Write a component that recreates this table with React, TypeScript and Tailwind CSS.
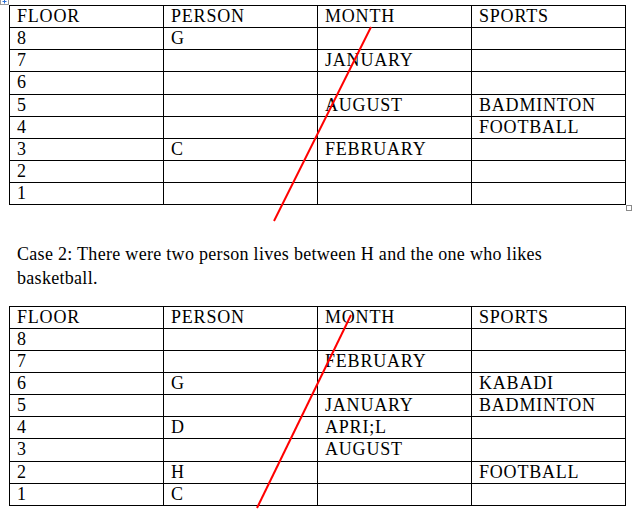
import React from "react";

type Row = [string, string, string, string];

const caseOne: Row[] = [
  ["FLOOR", "PERSON", "MONTH", "SPORTS"],
  ["8", "G", "", ""],
  ["7", "", "JANUARY", ""],
  ["6", "", "", ""],
  ["5", "", "AUGUST", "BADMINTON"],
  ["4", "", "", "FOOTBALL"],
  ["3", "C", "FEBRUARY", ""],
  ["2", "", "", ""],
  ["1", "", "", ""],
];

const caseTwo: Row[] = [
  ["FLOOR", "PERSON", "MONTH", "SPORTS"],
  ["8", "", "", ""],
  ["7", "", "FEBRUARY", ""],
  ["6", "G", "", "KABADI"],
  ["5", "", "JANUARY", "BADMINTON"],
  ["4", "D", "APRI;L", ""],
  ["3", "", "AUGUST", ""],
  ["2", "H", "", "FOOTBALL"],
  ["1", "C", "", ""],
];

// tallRow: the one row Word drew a pixel taller
function FloorTable({ rows, tallRow }: { rows: Row[]; tallRow: number }) {
  return (
    <div className="grid w-[617px] grid-cols-[154px_154px_154px_154px] border-l border-t border-black">
      {rows.map((row, r) =>
        row.map((cell, c) => (
          <div
            key={`${r}-${c}`}
            className={`border-b border-r border-black pl-[7px] text-[18px] leading-[20px] tracking-[0.8px] ${
              r === tallRow ? "h-[23px]" : "h-[22px]"
            }`}
          >
            {cell}
          </div>
        ))
      )}
    </div>
  );
}

export default function App() {
  return (
    <div className="relative h-[514px] w-[637px] overflow-hidden bg-white font-['Liberation_Serif','Times_New_Roman',serif] text-black">
      <div className="pl-[9px] pt-[5px]">
        <FloorTable rows={caseOne} tallRow={3} />

        <p className="mt-[38px] pl-[8px] text-[18px] leading-[23.5px] tracking-[0.3px]">
          Case 2: There were two person lives between H and the one who likes
          <br />
          basketball.
        </p>

        <div className="mt-[16px]">
          <FloorTable rows={caseTwo} tallRow={6} />
        </div>
      </div>

      {/* table move handle */}
      <svg className="absolute left-0 top-0" width="9" height="5" viewBox="0 0 9 5">
        <rect x="0.5" y="-1" width="8" height="5.5" fill="white" stroke="#9a9a9a" />
        <path d="M2.5 1.5h4M4.5 0v3.5" stroke="#2a6fd6" strokeWidth="1" />
      </svg>

      {/* table resize handle */}
      <div className="absolute left-[626px] top-[205px] h-[6px] w-[6px] border border-[#8a8a8a] bg-white" />

      {/* red strike lines */}
      <svg className="pointer-events-none absolute left-0 top-0" width="637" height="514">
        <line x1="371" y1="27" x2="274" y2="221" stroke="#ff0000" strokeWidth="2" />
        <line x1="351" y1="315" x2="257" y2="508" stroke="#ff0000" strokeWidth="2" />
      </svg>
    </div>
  );
}
